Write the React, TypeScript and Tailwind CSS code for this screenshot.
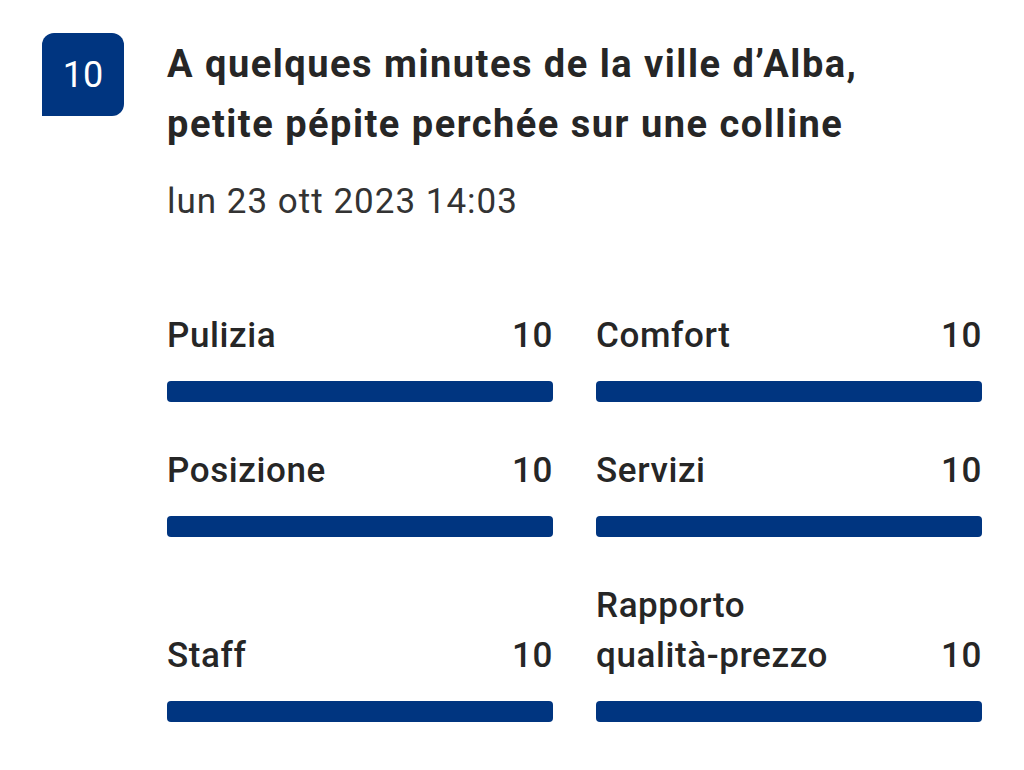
const scores = [
  { label: "Pulizia", value: "10" },
  { label: "Comfort", value: "10" },
  { label: "Posizione", value: "10" },
  { label: "Servizi", value: "10" },
  { label: "Staff", value: "10" },
  { label: "Rapporto qualità-prezzo", value: "10" },
];

function ScoreBar({ label, value }: { label: string; value: string }) {
  return (
    <div className="flex flex-col justify-end">
      <div className="flex items-end justify-between gap-4 text-[35px] leading-[50px] font-medium tracking-[0.6px] text-[#262626]">
        <span className="max-w-[250px]">{label}</span>
        <span>{value}</span>
      </div>
      <div className="mt-[20px] h-[21px] w-full rounded-[4px] bg-[#003580]" />
    </div>
  );
}

export default function App() {
  return (
    <div className="min-h-[770px] w-[1024px] bg-white font-['Roboto',sans-serif]">
      <div className="flex gap-[43px] pl-[42px] pr-[42px] pt-[33px]">
        <div className="flex h-[83px] w-[82px] shrink-0 items-center justify-center rounded-t-[12px] rounded-br-[12px] bg-[#003580] text-[36px] text-white">
          10
        </div>
        <div className="flex-1">
          <h1 className="mt-[1px] whitespace-nowrap text-[38px] font-bold leading-[60px] tracking-[1.5px] text-[#262626]">
            A quelques minutes de la ville d’Alba,
            <br />
            petite pépite perchée sur une colline
          </h1>
          <div className="mt-[28px] text-[35px] leading-[40px] tracking-[1px] text-[#333333]">
            lun 23 ott 2023 14:03
          </div>
          <div className="mt-[89px] grid grid-cols-2 gap-x-[43px] gap-y-[44px]">
            {scores.map((s) => (
              <ScoreBar key={s.label} label={s.label} value={s.value} />
            ))}
          </div>
        </div>
      </div>
    </div>
  );
}
